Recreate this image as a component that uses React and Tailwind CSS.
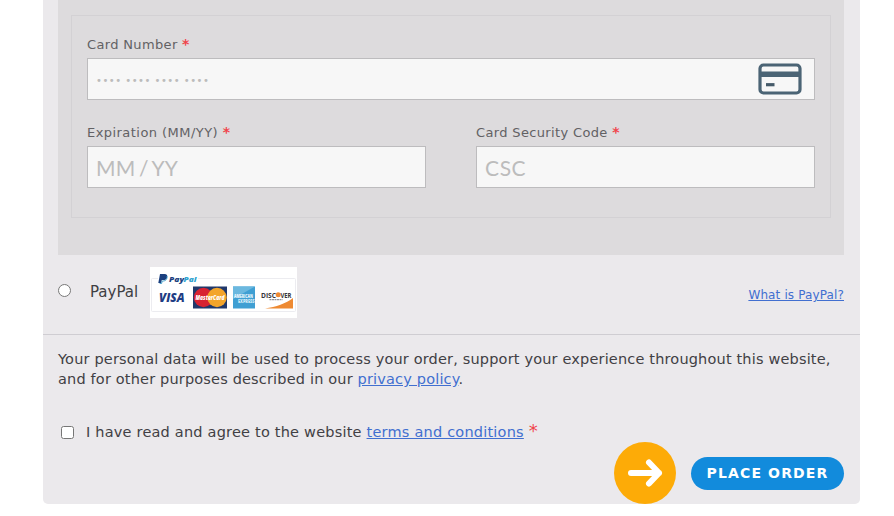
import React, { useState } from 'react';

function Required({ className = 'text-[14px] font-bold' }) {
  return <span className={`inline-block leading-4 text-[#f0454c] ${className}`}>*</span>;
}

function CardIcon() {
  return (
    <svg width="44" height="32" viewBox="0 0 44 32" fill="none">
      <rect x="2" y="2" width="40" height="28" rx="3.5" stroke="#4b6475" strokeWidth="3.2" />
      <path d="M2 11.3h40" stroke="#4b6475" strokeWidth="5.4" />
      <path d="M8 21.7h8.5" stroke="#455a69" strokeWidth="3.2" />
    </svg>
  );
}

function PayPalCards() {
  return (
    <svg width="147" height="51" viewBox="0 0 147 51" fontFamily="'Open Sans', sans-serif">
      <rect width="147" height="51" fill="#fff" />
      <rect x="1.5" y="11.5" width="144" height="33" rx="1" fill="none" stroke="#ececf0" />
      <rect x="8" y="6" width="40" height="12" fill="#fff" />
      <path d="M10 7h4.5c2.4 0 3.2 1.5 2.7 3.2-.5 2-2 2.8-4 2.8h-1.4l-.7 3H8.3z" fill="#1b3f7e" />
      <path d="M16.8 9c.8 3-1 5-3.8 5h-.8l-.6 2.5h-2" fill="none" stroke="#2790c3" strokeWidth="0.8" />
      <text x="19" y="15" fontSize="7.5" fontWeight="800" fontStyle="italic" fill="#1b3f7e" textLength="15" lengthAdjust="spacingAndGlyphs">Pay</text>
      <text x="33.5" y="15" fontSize="7.5" fontWeight="800" fontStyle="italic" fill="#2fa3d0" textLength="13" lengthAdjust="spacingAndGlyphs">Pal</text>
      <text x="9" y="34.5" fontSize="12" fontWeight="800" fontStyle="italic" fill="#203c83" textLength="25.5" lengthAdjust="spacingAndGlyphs">VISA</text>
      <rect x="43" y="19.5" width="34" height="22" fill="#20386b" />
      <circle cx="53.5" cy="30.5" r="9.7" fill="#d82332" />
      <circle cx="67" cy="30.5" r="9.7" fill="#f3a52b" />
      <text x="45.5" y="33" fontSize="6.5" fontWeight="800" fontStyle="italic" fill="#fff" textLength="29" lengthAdjust="spacingAndGlyphs">MasterCard</text>
      <rect x="83" y="19.5" width="22" height="22" fill="#3f9fd3" />
      <path d="M83 19.5h22L83 32z" fill="#6bb8df" />
      <text x="84" y="31" fontSize="4.8" fontWeight="800" fill="#e9f6fc" textLength="19" lengthAdjust="spacingAndGlyphs">AMERICAN</text>
      <text x="88" y="36" fontSize="4.8" fontWeight="800" fill="#d6edf8" textLength="16.5" lengthAdjust="spacingAndGlyphs">EXPRESS</text>
      <path d="M143 31v10.5h-28c11-1.5 21-5 28-10.5z" fill="#ee8a32" />
      <text x="111" y="30.5" fontSize="7.5" fontWeight="700" fill="#35353a" textLength="15" lengthAdjust="spacingAndGlyphs">DISC</text>
      <circle cx="128.2" cy="27.8" r="2.5" fill="#ee8a32" />
      <text x="130.5" y="30.5" fontSize="7.5" fontWeight="700" fill="#35353a" textLength="11" lengthAdjust="spacingAndGlyphs">VER</text>
      <path d="M119.5 32.7h13" stroke="#77777b" strokeWidth="1" strokeDasharray="2 0.5" />
    </svg>
  );
}

function CardField({ label, placeholder, labelClass, inputClass, children }) {
  return (
    <label className="block">
      <span className={`block h-[18px] whitespace-nowrap text-[13px] leading-[18px] text-[#626164] ${labelClass}`}>
        {label} <Required />
      </span>
      <span className="mt-1 flex h-[42px] items-center border border-[#bdbcbe] bg-[#f7f7f7] pr-3 pl-2">
        <input
          type="text"
          placeholder={placeholder}
          className={`h-full min-w-0 flex-1 bg-transparent outline-none placeholder:text-[#bcbcbc] ${inputClass}`}
        />
        {children}
      </span>
    </label>
  );
}

export default function App() {
  const [paypal, setPaypal] = useState(false);
  const [accepted, setAccepted] = useState(false);

  return (
    <div className="h-[516px] w-[894px] overflow-hidden bg-white pl-[43px] font-['DejaVu_Sans',sans-serif]">
      <div className="h-[504px] w-[817px] rounded-b-[5px] bg-[#ebe9ec]">
        <div className="mr-4 ml-[15px] h-[255px] bg-[#dddbdd] pt-[15px] pr-[13px] pl-[13px]">
          <div className="h-[203px] border border-[#d3d1d4] pt-5 pr-[15px] pl-[15px]">
            <CardField
              label="Card Number"
              placeholder="•••• •••• •••• ••••"
              labelClass="tracking-[0.35px]"
              inputClass="pt-0.5 text-[10px] tracking-[0.5px] placeholder:text-[#b0b0b0]"
            >
              <CardIcon />
            </CardField>
            <div className="mt-6 grid grid-cols-2 gap-[50px]">
              <CardField
                label="Expiration (MM/YY)"
                placeholder="MM / YY"
                labelClass="tracking-[0.45px]"
                inputClass="font-['Lato',sans-serif] text-[21px] tracking-[0.2px] [word-spacing:-2px]"
              />
              <CardField
                label="Card Security Code"
                placeholder="CSC"
                labelClass="tracking-[0.35px]"
                inputClass="font-['Lato',sans-serif] text-[21px] tracking-[0.6px]"
              />
            </div>
          </div>
        </div>

        <div className="flex h-[80px] border-b border-[#cfcdd2] pr-4 pl-[15px]">
          <label className="flex h-[62px] pt-3">
            <input
              type="radio"
              checked={paypal}
              onChange={() => setPaypal(true)}
              className="mt-[17px] h-[13px] w-[13px] shrink-0"
            />
            <span className="mt-[15px] ml-[19px] w-[60px] text-[15px] leading-5 text-[#3f3f43]">PayPal</span>
            <PayPalCards />
          </label>
          <a href="#" className="mt-8 ml-auto h-4 text-[12px] leading-4 tracking-[0.13px] text-[#416fd0] underline">
            What is PayPal?
          </a>
        </div>

        <p className="mt-[14px] ml-[15px] h-10 text-[14.5px] leading-5 tracking-[0.17px] whitespace-nowrap text-[#414044]">
          <span className="block">
            Your personal data will be used to process your order, support your experience throughout this website,
          </span>
          <span className="block">
            and for other purposes described in our <a href="#" className="text-[#416fd0] underline">privacy policy</a>.
          </span>
        </p>

        <label className="mt-[33px] ml-[18px] flex h-5 items-center text-[14.5px] leading-5 tracking-[0.21px] whitespace-nowrap text-[#414044]">
          <input
            type="checkbox"
            checked={accepted}
            onChange={(e) => setAccepted(e.target.checked)}
            className="h-[13px] w-[13px]"
          />
          <span className="ml-3">
            I have read and agree to the website{' '}
            <a href="#" className="text-[#416fd0] underline">terms and conditions</a> <Required className="text-[18px]" />
          </span>
        </label>

        <div className="flex items-center justify-end gap-[15px] pr-4">
          <svg width="62" height="62" viewBox="0 0 62 62" fill="none">
            <circle cx="31" cy="31" r="31" fill="#fdab07" />
            <path d="M17 31h28M35 20.5L45 31 35 41.500" stroke="#fff" strokeWidth="6" strokeLinecap="round" strokeLinejoin="round" />
          </svg>
          <button
            type="button"
            className="h-[33px] w-[153px] rounded-full bg-[#128bdc] text-[14px] font-bold tracking-[1.15px] whitespace-nowrap text-white"
          >
            PLACE ORDER
          </button>
        </div>
      </div>
    </div>
  );
}
